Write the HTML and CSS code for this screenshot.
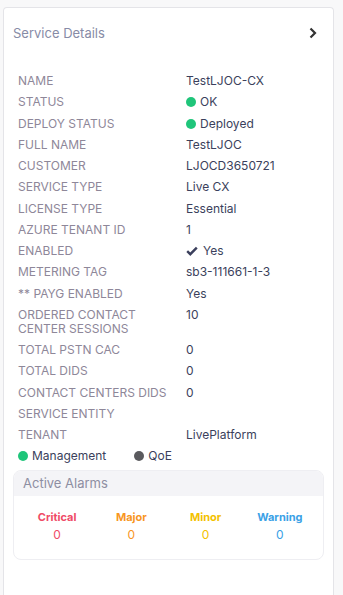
FILE: index.html
```html
<!DOCTYPE html>
<html lang="en">
  <head>
    <meta charset="utf-8">
    <title>Service Details</title>
    <link rel="stylesheet" href="styles.css">
  </head>
  <body>
    <div class="card">
        <div class="card-head">
            <span class="title">Service Details</span>
            <svg class="chev" width="8" height="12" viewBox="0 0 8 12"><path d="M1.5 1.5 L6 6 L1.5 10.5" fill="none" stroke="#333" stroke-width="2.2"/></svg>
        </div>
        <div class="details">
            <div class="lbl">NAME</div><div class="val">TestLJOC-CX</div>
            <div class="lbl">STATUS</div><div class="val"><span class="dot green"></span>OK</div>
            <div class="lbl">DEPLOY STATUS</div><div class="val"><span class="dot green"></span>Deployed</div>
            <div class="lbl">FULL NAME</div><div class="val">TestLJOC</div>
            <div class="lbl">CUSTOMER</div><div class="val">LJOCD3650721</div>
            <div class="lbl">SERVICE TYPE</div><div class="val">Live CX</div>
            <div class="lbl">LICENSE TYPE</div><div class="val">Essential</div>
            <div class="lbl">AZURE TENANT ID</div><div class="val">1</div>
            <div class="lbl">ENABLED</div><div class="val"><svg class="check" width="12" height="10" viewBox="0 0 12 10"><path d="M1.2 5.2 L4.3 8.2 L10.8 1.6" fill="none" stroke="#3b3f5c" stroke-width="2.4"/></svg>Yes</div>
            <div class="lbl">METERING TAG</div><div class="val">sb3-111661-1-3</div>
            <div class="lbl">** PAYG ENABLED</div><div class="val">Yes</div>
            <div class="lbl">ORDERED CONTACT<br>CENTER SESSIONS</div><div class="val">10</div>
            <div class="lbl">TOTAL PSTN CAC</div><div class="val">0</div>
            <div class="lbl">TOTAL DIDS</div><div class="val">0</div>
            <div class="lbl">CONTACT CENTERS DIDS</div><div class="val">0</div>
            <div class="lbl">SERVICE ENTITY</div><div class="val"></div>
            <div class="lbl">TENANT</div><div class="val">LivePlatform</div>
        </div>
        <div class="legend">
            <span class="leg"><span class="dot green"></span>Management</span>
            <span class="leg"><span class="dot grey"></span>QoE</span>
        </div>
        <div class="alarms">
            <div class="alarms-head">Active Alarms</div>
            <div class="alarms-body">
                <div class="alarm critical"><b>Critical</b><span>0</span></div>
                <div class="alarm major"><b>Major</b><span>0</span></div>
                <div class="alarm minor"><b>Minor</b><span>0</span></div>
                <div class="alarm warning"><b>Warning</b><span>0</span></div>
            </div>
        </div>
    </div>
  </body>
</html>
```
FILE: styles.css
```css
body {
    margin: 0;
    padding: 7px 9px 0 3px;
    background-color: #f8f8f9;
    font-family: Inter, 'Noto Sans', sans-serif;
    font-size: 12px;
    color: #3b3f5c;
}
.card {
    background-color: white;
    border: 1px solid #e4e4e8;
    border-bottom: none;
    border-radius: 4px 4px 0 0;
    height: 588px;
    box-sizing: border-box;
    padding: 0 9px 0 9px;
}
.card-head {
    display: flex;
    justify-content: space-between;
    align-items: center;
    height: 50px;
    padding-right: 7px;
}
.title {
    font-size: 13px;
    color: #878ba6;
}
.details {
    display: grid;
    grid-template-columns: 168px 1fr;
    row-gap: 7.25px;
    padding: 16px 0 0 5px;
    line-height: 14px;
}
.lbl {
    color: #8e8799;
}
.val {
    display: flex;
    align-items: center;
    align-self: start;
    height: 14px;
}
.dot {
    display: inline-block;
    width: 10px;
    height: 10px;
    border-radius: 50%;
    margin-right: 4px;
}
.green { background-color: #1fc57a; }
.grey { background-color: #5a5a5e; }
.check { margin-right: 5px; }
.legend {
    display: flex;
    gap: 28px;
    padding: 7px 0 0 5px;
    line-height: 14px;
}
.leg {
    display: flex;
    align-items: center;
}
.alarms {
    margin-top: 7px;
    border: 1px solid #eeeef2;
    border-radius: 8px;
    overflow: hidden;
}
.alarms-head {
    background-color: #f4f4f7;
    color: #8e8ea2;
    font-size: 13px;
    padding: 4px 9px 5px;
    line-height: 16px;
}
.alarms-body {
    display: grid;
    grid-template-columns: repeat(4, 1fr);
    padding: 14px 6px 17px;
    text-align: center;
    font-size: 11px;
}
.alarm b {
    display: block;
    font-weight: 700;
    margin-bottom: 3px;
}
.alarm span {
    font-size: 12px;
}
.critical { color: #ef4b66; }
.major { color: #f8961f; }
.minor { color: #f3c100; }
.warning { color: #3aa1e6; }
```
